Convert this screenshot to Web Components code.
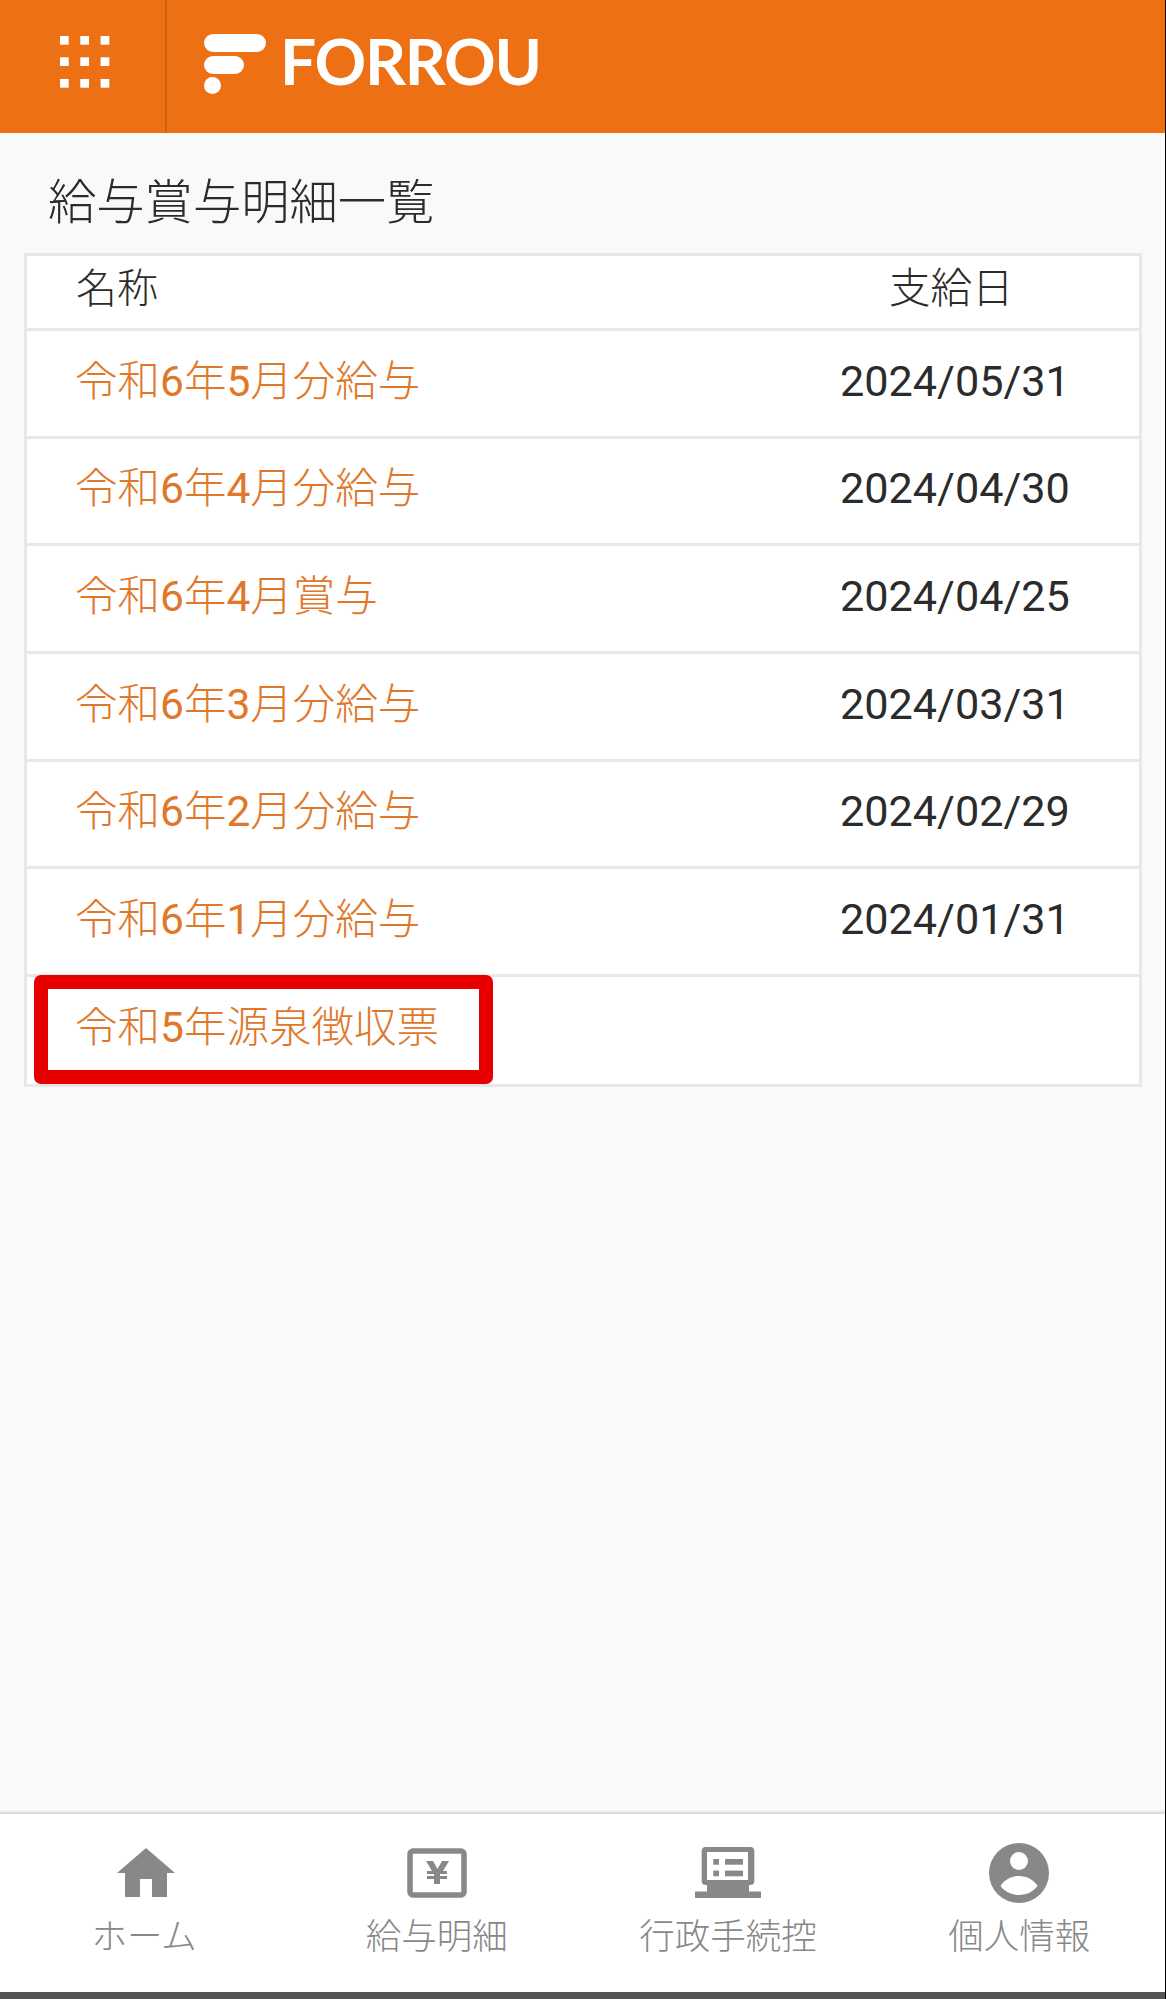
<!DOCTYPE html>
<html lang="ja"><head><meta charset="utf-8"><title>給与賞与明細一覧</title>
<style>
html,body{margin:0;padding:0;background:#f9f9f9;}
body{font-family:Roboto,"Noto Sans CJK JP",sans-serif;}
</style></head><body>
<app-shell>
  <app-header slot="top"></app-header>
  <page-title>給与賞与明細一覧</page-title>
  <pay-table>
    <pay-row head name="名称" date="支給日"></pay-row>
    <pay-row name="令和6年5月分給与" date="2024/05/31"></pay-row>
    <pay-row name="令和6年4月分給与" date="2024/04/30"></pay-row>
    <pay-row name="令和6年4月賞与" date="2024/04/25"></pay-row>
    <pay-row name="令和6年3月分給与" date="2024/03/31"></pay-row>
    <pay-row name="令和6年2月分給与" date="2024/02/29"></pay-row>
    <pay-row name="令和6年1月分給与" date="2024/01/31"></pay-row>
    <pay-row last name="令和5年源泉徴収票" date=""><highlight-box></highlight-box></pay-row>
  </pay-table>
  <bottom-nav slot="bottom"></bottom-nav>
</app-shell>
<script>
function def(name, html, setup){
  customElements.define(name, class extends HTMLElement{
    constructor(){super();this.attachShadow({mode:'open'}).innerHTML=html;}
    connectedCallback(){ if(setup) setup(this); }
  });
}
def('app-shell',`<style>:host{display:flex;flex-direction:column;height:1999px;width:1166px;box-sizing:border-box;border-right:1px solid #000;overflow:hidden}
main{flex:1;display:block}</style>
<slot name="top"></slot><main><slot></slot></main><slot name="bottom"></slot>`);

def('app-header',`<style>:host{display:flex;height:133px;background:#ed7014;flex:none}
.menu{width:167px;box-sizing:border-box;border-right:2px solid #cf6212;padding:36px 0 0 60px}
.brand{display:flex;align-items:flex-start;padding:34px 0 0 37px;gap:14px}
.word{font:700 64px/1 Lato,sans-serif;color:#fff;letter-spacing:-1.3px;margin-top:-5px}
svg{display:block}</style>
<div class="menu"><svg width="50" height="52" viewBox="0 0 50 52" fill="#fff">
<rect x="0" y="0" width="8.700" height="8.700"/><rect x="20.300" y="0" width="8.700" height="8.700"/><rect x="40.600" y="0" width="8.700" height="8.700"/>
<rect x="0" y="21.300" width="8.700" height="8.700"/><rect x="20.300" y="21.300" width="8.700" height="8.700"/><rect x="40.600" y="21.300" width="8.700" height="8.700"/>
<rect x="0" y="43" width="8.700" height="8.700"/><rect x="20.300" y="43" width="8.700" height="8.700"/><rect x="40.600" y="43" width="8.700" height="8.700"/></svg></div>
<div class="brand"><svg width="62" height="60" viewBox="0 0 62 60" fill="#fff">
<rect x="0" y="0" width="62" height="18" rx="9"/><rect x="0" y="22" width="40" height="18" rx="9"/><circle cx="8.500" cy="51.500" r="8.500"/></svg>
<span class="word">FORROU</span></div>`);

def('page-title',`<style>:host{display:block;font-size:48.300px;line-height:60px;color:#2b2b2b;padding:40px 0 20px 48px;font-weight:300}</style><slot></slot>`);

def('pay-table',`<style>:host{display:block;margin:0 24px;background:#fff;border:3px solid #e8e8e8;width:1112px;box-sizing:content-box}</style><slot></slot>`);

def('pay-row',`<style>:host{display:grid;grid-template-columns:813px 1fr;height:104.700px;border-bottom:3px solid #e8e8e8;position:relative;font-size:42.500px;align-items:start}
:host([head]){height:72px;color:#2b2b2b}
:host([last]){border-bottom:none;height:107px}
.n{padding:23.500px 0 0 48px;color:#e0782c;line-height:54px;white-space:nowrap;font-weight:300}
.n span{font-weight:400}
.d{padding-top:23.500px;color:#2b2b2b;line-height:54px;white-space:nowrap;font-size:43.200px}
:host([head]) .n{color:#2b2b2b;padding:6px 0 0 49px;font-size:41px}
:host([head]) .d{padding:6px 0 0 49px;font-size:41.500px;font-weight:300}
:host([last]) .n{padding-top:24px}</style>
<div class="n"></div><div class="d"></div><slot></slot>`,
el=>{const s=el.shadowRoot,n=s.querySelector('.n');n.innerHTML=el.getAttribute('name').replace(/\d/g,'<span>$&</span>');s.querySelector('.d').textContent=el.getAttribute('date');});

def('highlight-box',`<style>:host{position:absolute;left:7px;top:-2px;width:459px;height:109px;box-sizing:border-box;border:14px solid #e60000;border-radius:7px;pointer-events:none}</style>`);

const items=[
['ホーム',`<svg width="60" height="50" viewBox="0 0 60 50" fill="#888"><path d="M30 0 59 25H51V49H36V31H24V49H9V25H1Z"/></svg>`],
['給与明細',`<svg width="60" height="50" viewBox="0 0 60 50"><rect x="3" y="3" width="54" height="44" rx="3" fill="#fff" stroke="#888" stroke-width="5.500"/><path d="M19 13h7l4.500 8 4.500-8h7l-6 10h4v3h-7v2h7v3h-7v5h-6v-5h-7v-3h7v-2h-7v-3h5z" fill="#888"/></svg>`],
['行政手続控',`<svg width="66" height="51" viewBox="0 0 66 51" fill="#888"><path fill-rule="evenodd" d="M10.700 0H55.300a4 4 0 0 1 4 4V34a4 4 0 0 1-4 4H54V44.500H66V51H0V44.500H12V38H10.700a4 4 0 0 1-4-4V4a4 4 0 0 1 4-4ZM12 5V33H53V5Z"/><rect x="18.300" y="12" width="5.700" height="5.700"/><rect x="30" y="12" width="18" height="5.700"/><rect x="18.300" y="23.600" width="5.700" height="5.700"/><rect x="30" y="23.600" width="18" height="5.700"/></svg>`],
['個人情報',`<svg width="60" height="60" viewBox="0 0 60 60"><circle cx="30" cy="30" r="30" fill="#888"/><circle cx="30" cy="18" r="9" fill="#fff"/><path d="M11.500 43C15 37 22 33 30 33S45 37 48.500 43C45 48 38 52 30 52S15 48 11.500 43Z" fill="#fff"/></svg>`]
];
def('bottom-nav',`<style>:host{display:block;flex:none;background:#fff}
nav{display:grid;grid-template-columns:repeat(4,1fr);height:178px;border-top:2px solid #dcdcdc;box-shadow:0 -1px 2px rgba(0,0,0,.06);background:#fff}
.i{display:flex;flex-direction:column;align-items:center;color:#888;font-size:35.500px;line-height:44px;font-weight:300}
.ic{height:60px;margin-top:29px;display:flex;align-items:flex-end;justify-content:center}
.ic svg{margin-bottom:5px}
.i:last-child .ic svg{margin-bottom:0}
.l{margin-top:11.500px;white-space:nowrap}
.i:first-child .l{margin-right:3px}
.bar{height:7px;background:#555}
svg{display:block}</style>
<nav>${items.map(([t,s])=>`<div class="i"><div class="ic">${s}</div><div class="l">${t}</div></div>`).join('')}</nav><div class="bar"></div>`);
</script>
</body></html>
